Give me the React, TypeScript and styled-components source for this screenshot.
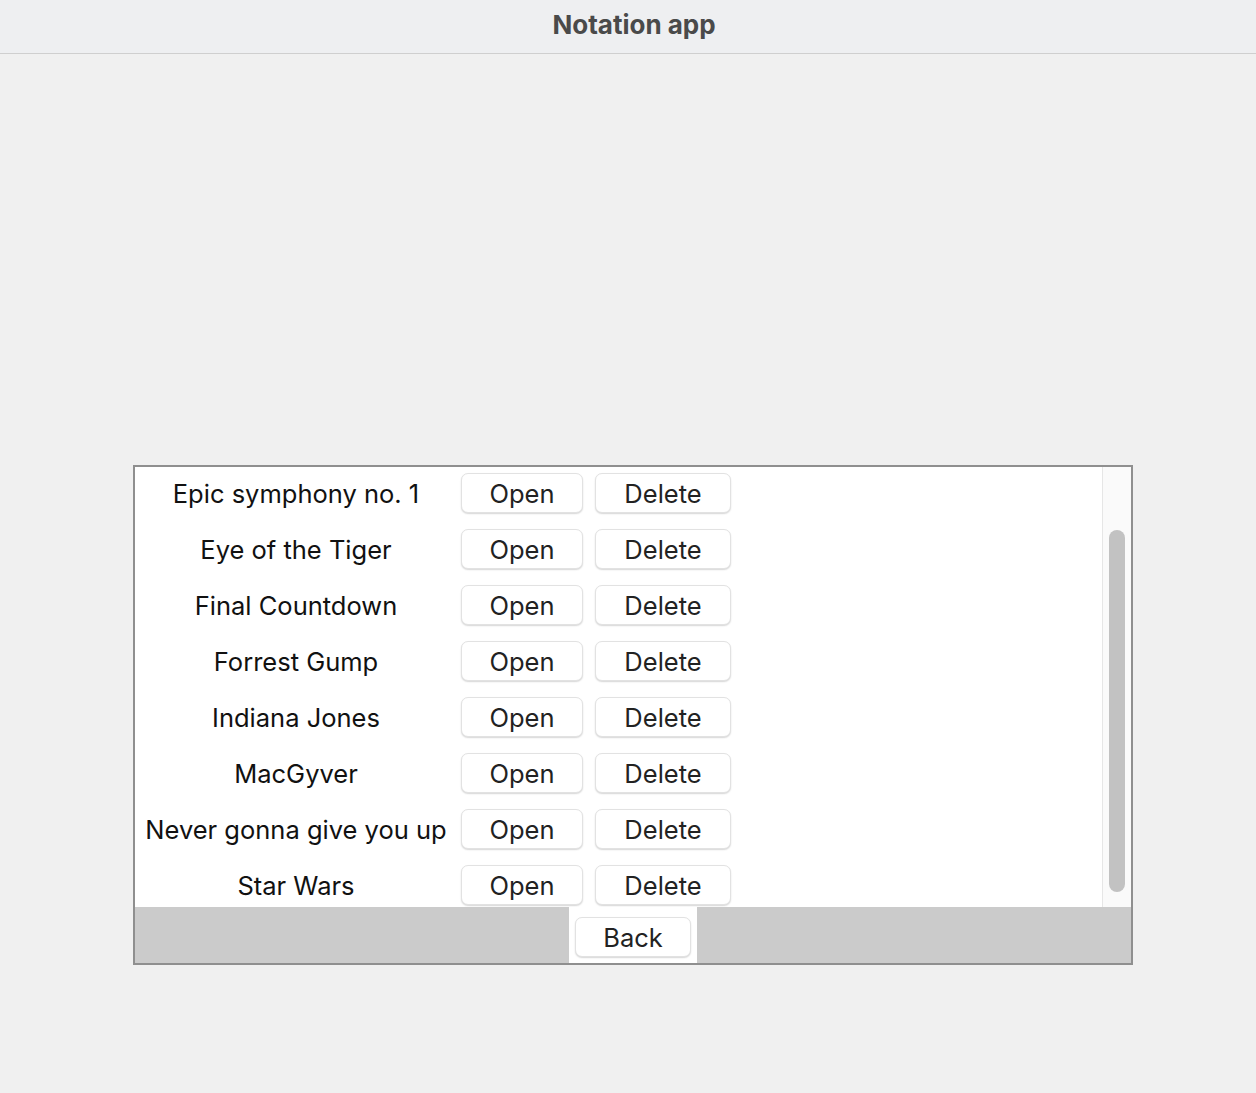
import React from "react";
import styled, { createGlobalStyle } from "styled-components";

const Global = createGlobalStyle`
  html, body { margin: 0; padding: 0; }
  body {
    background: #f0f0f0;
    font-family: "Inter", "Liberation Sans", sans-serif;
    width: 1256px;
    height: 1093px;
    overflow: hidden;
  }
`;

const TitleBar = styled.header`
  height: 54px;
  background: #eeeff1;
  border-bottom: 1px solid #cfcfcf;
  display: flex;
  align-items: center;
  justify-content: center;
  font-size: 26px;
  font-weight: 700;
  color: #4a4a4a;
  padding: 0 0 5px 12px;
  box-sizing: border-box;
`;

const Body = styled.main`
  padding: 411px 0 0 133px;
`;

const Panel = styled.section`
  width: 996px;
  height: 496px;
  border: 2px solid #8f8f8f;
  display: flex;
  flex-direction: column;
  background: #fff;
`;

const ScrollArea = styled.div`
  height: 440px;
  display: flex;
  overflow: hidden;
`;

const List = styled.div`
  flex: 1;
  display: flex;
  flex-direction: column;
  gap: 16px;
  padding-top: 6px;
`;

const Row = styled.div`
  display: grid;
  grid-template-columns: 306px 122px 136px;
  column-gap: 12px;
  height: 40px;
  align-items: center;
  padding-left: 8px;
`;

const Label = styled.span`
  text-align: center;
  font-size: 25.5px;
  color: #111;
  white-space: nowrap;
`;

const Button = styled.button<{ $w: number }>`
  width: ${(p) => p.$w}px;
  height: 40px;
  background: #fff;
  border: 1px solid #e2e2e2;
  border-radius: 7px;
  box-shadow: 0 1px 1.5px rgba(0, 0, 0, 0.16);
  font-family: "Inter", "Liberation Sans", sans-serif;
  font-size: 25.5px;
  color: #222;
  padding: 0;
  display: flex;
  align-items: center;
  justify-content: center;
`;

const Track = styled.div`
  width: 29px;
  border-left: 1px solid #e6e6e6;
  background: #fafafa;
  display: flex;
  flex-direction: column;
  align-items: center;
  padding-top: 63px;
  box-sizing: border-box;
`;

const Thumb = styled.div`
  width: 16px;
  height: 362px;
  border-radius: 8px;
  background: #c2c2c2;
`;

const Footer = styled.footer`
  flex: 1;
  background: #cbcbcb;
  display: flex;
  justify-content: center;
`;

const BackWrap = styled.div`
  background: #fff;
  padding: 10px 6px 6px;
  display: flex;
`;

const items = [
  "Epic symphony no. 1",
  "Eye of the Tiger",
  "Final Countdown",
  "Forrest Gump",
  "Indiana Jones",
  "MacGyver",
  "Never gonna give you up",
  "Star Wars",
];

export default function App() {
  return (
    <>
      <Global />
      <TitleBar>Notation app</TitleBar>
      <Body>
        <Panel>
          <ScrollArea>
            <List>
              {items.map((name) => (
                <Row key={name}>
                  <Label>{name}</Label>
                  <Button $w={122}>Open</Button>
                  <Button $w={136}>Delete</Button>
                </Row>
              ))}
            </List>
            <Track>
              <Thumb />
            </Track>
          </ScrollArea>
          <Footer>
            <BackWrap>
              <Button $w={116}>Back</Button>
            </BackWrap>
          </Footer>
        </Panel>
      </Body>
    </>
  );
}
